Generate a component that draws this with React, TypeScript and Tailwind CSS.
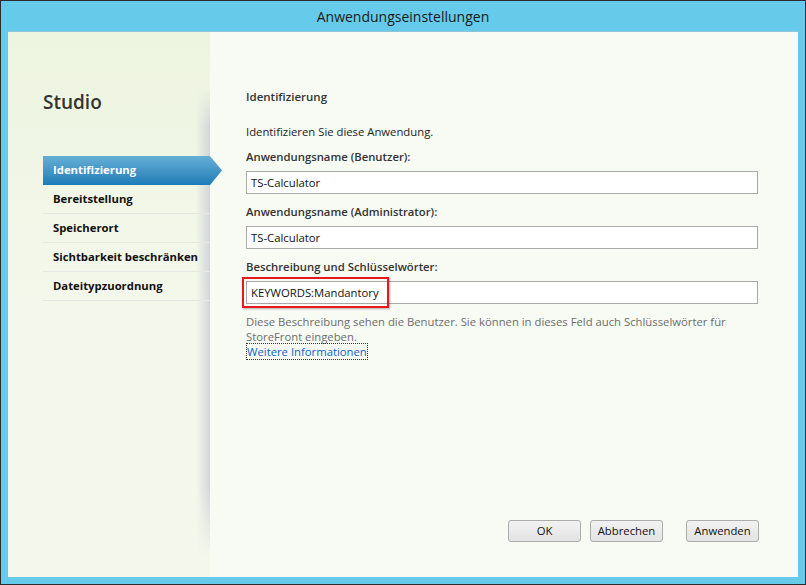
import React from "react";

const navItems = [
  { label: "Identifizierung", active: true },
  { label: "Bereitstellung" },
  { label: "Speicherort" },
  { label: "Sichtbarkeit beschränken" },
  { label: "Dateitypzuordnung" },
];

function Field({ label, value, highlight }: { label: string; value: string; highlight?: boolean }) {
  return (
    <div className="flex flex-col">
      <div className="h-[15px] text-[11.3px] leading-[15px] font-semibold text-[#333]">{label}</div>
      <div className="relative mt-[7px] h-[23px] w-[512px] border border-[#a9a9a9] bg-white px-[4px] text-[11.3px] leading-[21px] text-[#111]">
        {value}
        {highlight && (
          <div className="absolute left-[-5px] top-[-5px] h-[31px] w-[147px] border-2 border-[#e8191c] shadow-[1px_1px_2px_rgba(0,0,0,0.3)]" />
        )}
      </div>
    </div>
  );
}

function DialogButton({ children, className = "" }: { children: React.ReactNode; className?: string }) {
  return (
    <button
      className={`h-[22px] w-[73px] rounded-[3px] border border-[#acacac] bg-gradient-to-b from-[#f2f2f2] to-[#e3e3e3] text-[11.3px] leading-[20px] text-[#111] ${className}`}
    >
      {children}
    </button>
  );
}

export default function App() {
  return (
    <div
      className="h-[585px] w-[806px] border border-[#2b2b2e] bg-[#66cbea]"
      style={{ fontFamily: '"Open Sans", "Noto Sans", sans-serif' }}
    >
      {/* Title bar */}
      <div className="flex h-[30px] items-center justify-center text-[14px] text-[#1a1a1a]">
        Anwendungseinstellungen
      </div>

      <div className="mx-[7px] flex h-[546px] border-t border-[#8fc3d6] bg-[#f3f8ea]">
        {/* Left navigation */}
        <div className="relative w-[202px] shrink-0 bg-gradient-to-b from-[#edf4df] via-[#f4f8ec] to-[#f4f8ec] pl-[35px]">
          <div className="absolute right-0 top-[57px] bottom-[21px] w-[14px] bg-gradient-to-r from-transparent to-[#d2d5d8] [mask-image:linear-gradient(to_bottom,transparent,black_8%,black_85%,transparent)]" />
          <div className="pt-[58px] text-[19px] leading-[24px] font-semibold text-[#333]">Studio</div>
          <div className="mt-[42px] flex flex-col">
            {navItems.map((item) =>
              item.active ? (
                <div
                  key={item.label}
                  className="relative z-10 flex h-[29px] w-[179px] items-center bg-gradient-to-b from-[#65afd6] to-[#1c7cb7] pl-[10px] text-[11.3px] font-bold text-white [clip-path:polygon(0_0,calc(100%-12px)_0,100%_50%,calc(100%-12px)_100%,0_100%)]"
                >
                  {item.label}
                </div>
              ) : (
                <div
                  key={item.label}
                  className="relative z-10 flex h-[29px] w-[167px] items-center border-b border-[#e6e8e4] pl-[10px] text-[11.3px] font-bold text-[#111]"
                >
                  {item.label}
                </div>
              )
            )}
          </div>
        </div>

        {/* Right content */}
        <div className="flex flex-1 flex-col bg-[#f8faf4] pl-[36px]">
          <div className="pt-[57px] text-[11.5px] leading-[16px] font-semibold text-[#333]">Identifizierung</div>
          <div className="mt-[19px] text-[11.3px] leading-[16px] text-[#222]">Identifizieren Sie diese Anwendung.</div>
          <div className="mt-[9px] flex flex-col gap-[10px]">
            <Field label="Anwendungsname (Benutzer):" value="TS-Calculator" />
            <Field label="Anwendungsname (Administrator):" value="TS-Calculator" />
            <Field label="Beschreibung und Schlüsselwörter:" value="KEYWORDS:Mandantory" highlight />
          </div>
          <div className="mt-[10px] w-[490px] text-[11.3px] leading-[15px] text-[#6d6d6d]">
            Diese Beschreibung sehen die Benutzer. Sie können in dieses Feld auch Schlüsselwörter für StoreFront eingeben.
          </div>
          <div className="text-[11.3px] leading-[15px]">
            <span className="border border-dotted border-[#333] text-[#0a64c8]">Weitere Informationen</span>
          </div>
          <div className="mt-auto mb-[35px] flex pl-[262px]">
            <DialogButton>OK</DialogButton>
            <DialogButton className="ml-[9px]">Abbrechen</DialogButton>
            <DialogButton className="ml-[23px] w-[71px]">Anwenden</DialogButton>
          </div>
        </div>
      </div>
    </div>
  );
}
